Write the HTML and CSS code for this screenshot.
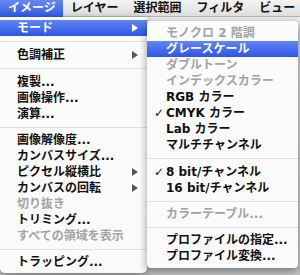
FILE: index.html
```html
<!DOCTYPE html>
<html lang="ja">
<head>
    <meta charset="UTF-8">
    <title>イメージ メニュー</title>
    <link rel="stylesheet" href="styles.css">
</head>
<body>
    <div class="menubar">
        <div class="title active">イメージ</div>
        <div class="title">レイヤー</div>
        <div class="title">選択範囲</div>
        <div class="title">フィルタ</div>
        <div class="title">ビュー</div>
    </div>

    <div class="workspace"></div>

    <div class="menu main-menu">
        <div class="item active">モード<span class="arrow"></span></div>
        <div class="sep"></div>
        <div class="item">色調補正<span class="arrow"></span></div>
        <div class="sep"></div>
        <div class="item">複製...</div>
        <div class="item">画像操作...</div>
        <div class="item">演算...</div>
        <div class="sep narrow"></div>
        <div class="item">画像解像度...</div>
        <div class="item">カンバスサイズ...</div>
        <div class="item">ピクセル縦横比<span class="arrow"></span></div>
        <div class="item">カンバスの回転<span class="arrow"></span></div>
        <div class="item disabled">切り抜き</div>
        <div class="item">トリミング...</div>
        <div class="item disabled">すべての領域を表示</div>
        <div class="sep narrow"></div>
        <div class="item">トラッピング...</div>
    </div>

    <div class="menu sub-menu">
        <div class="item disabled"><span class="check"></span>モノクロ 2 階調</div>
        <div class="item active"><span class="check"></span>グレースケール</div>
        <div class="item disabled"><span class="check"></span>ダブルトーン</div>
        <div class="item disabled"><span class="check"></span>インデックスカラー</div>
        <div class="item"><span class="check"></span>RGB カラー</div>
        <div class="item"><span class="check">✓</span>CMYK カラー</div>
        <div class="item"><span class="check"></span>Lab カラー</div>
        <div class="item"><span class="check"></span>マルチチャンネル</div>
        <div class="sep"></div>
        <div class="item"><span class="check">✓</span>8 bit/チャンネル</div>
        <div class="item"><span class="check"></span>16 bit/チャンネル</div>
        <div class="sep narrow"></div>
        <div class="item disabled"><span class="check"></span>カラーテーブル...</div>
        <div class="sep narrow"></div>
        <div class="item"><span class="check"></span>プロファイルの指定...</div>
        <div class="item"><span class="check"></span>プロファイル変換...</div>
    </div>
</body>
</html>
```

FILE: styles.css
```css
body {
    margin: 0;
    width: 300px;
    height: 275px;
    overflow: hidden;
    position: relative;
    background: #c9c9c9;
    font-family: "DejaVu Sans", "Noto Sans CJK JP", sans-serif;
    font-size: 12px;
    font-weight: bold;
    color: #111;
}

.menubar {
    display: flex;
    height: 17px;
    background: linear-gradient(#f3f3f3, #dcdcdc);
    box-shadow: inset 0 -1px 0 #b5b5b5;
}

.title {
    flex-shrink: 0;
    padding: 0 7px 0 8px;
    line-height: 17px;
}

.title.active {
    color: #fff;
    background: linear-gradient(#6688f2, #2f5ae6);
}

.workspace {
    height: 258px;
    background: linear-gradient(#ededed, #d4d4d4 20px, #c4c4c4);
}

.menu {
    position: absolute;
    background: rgba(252, 252, 252, 0.97);
    box-shadow: 0 3px 9px rgba(0, 0, 0, 0.4);
    border-radius: 0 0 5px 5px;
}

.main-menu {
    top: 17px;
    left: 0;
    width: 147px;
    padding: 3px 0 3px;
}

.sub-menu {
    top: 21px;
    left: 147px;
    width: 151px;
    padding: 4px 0 4px;
    border-radius: 4px;
}

.item {
    position: relative;
    height: 16px;
    line-height: 16px;
    padding-left: 17px;
    white-space: nowrap;
}

.sub-menu .item {
    padding-left: 7px;
}

.item.active {
    color: #fff;
    background: linear-gradient(#6285f3, #2c57e7);
}

.item.disabled {
    color: #a3a3a3;
}

.check {
    display: inline-block;
    width: 12px;
    font-weight: normal;
}

.arrow {
    position: absolute;
    right: 9px;
    top: 4px;
    width: 0;
    height: 0;
    border-top: 4px solid transparent;
    border-bottom: 4px solid transparent;
    border-left: 6px solid #555;
}

.item.active .arrow {
    border-left-color: #fff;
}

.sep {
    height: 11px;
    position: relative;
}

.sep.narrow {
    height: 10px;
}

.sep:after {
    content: "";
    position: absolute;
    left: 0;
    right: 0;
    top: 5px;
    height: 1px;
    background: #e0e0e0;
}
```
